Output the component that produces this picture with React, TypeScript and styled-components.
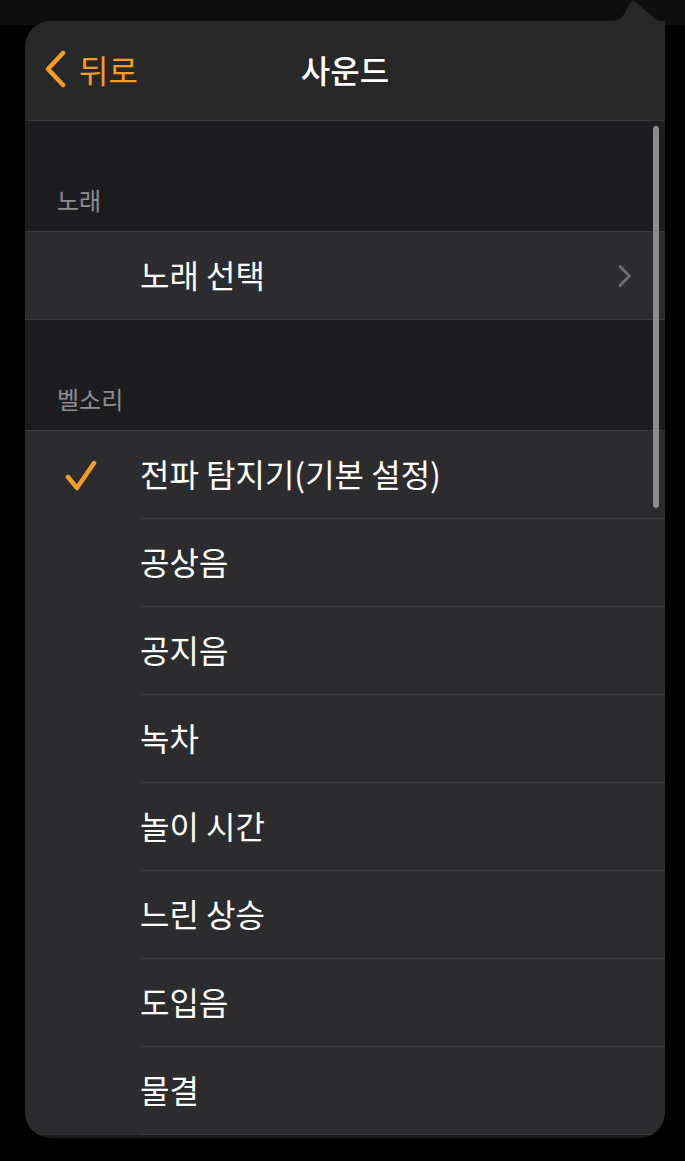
import React from "react";
import styled, { createGlobalStyle } from "styled-components";

const Global = createGlobalStyle`
  html, body { margin: 0; padding: 0; }
  body {
    background: linear-gradient(to bottom, #0e0e0e 0, #0e0e0e 25px, #000 25px, #000 100%);
    font-family: "Noto Sans CJK KR", "Noto Sans", sans-serif;
    height: 1161px;
    overflow: hidden;
  }
`;

const Page = styled.div`
  padding: 21px 20px 0 25px;
`;

const Panel = styled.div`
  position: relative;
  width: 640px;
  height: 1117px;
  background: #1c1c1e;
  border-radius: 26px 0 26px 26px;
`;

const Clip = styled.div`
  height: 100%;
  overflow: hidden;
  border-radius: 26px 0 26px 26px;
`;

const Pointer = styled.svg`
  position: absolute;
  right: 0;
  top: -21px;
  width: 53px;
  height: 50px;
`;

const NavBar = styled.div`
  height: 100px;
  box-sizing: border-box;
  padding-bottom: 3px;
  background: #272728;
  border-bottom: 1px solid #38383a;
  display: grid;
  grid-template-columns: 1fr auto 1fr;
  align-items: center;
`;

const Back = styled.div`
  display: flex;
  align-items: center;
  gap: 13px;
  padding-left: 19px;
  color: #f29d25;
  font-size: 32px;
  line-height: 1;
`;

const Title = styled.div`
  color: #ffffff;
  font-size: 32px;
  font-weight: 500;
  line-height: 1;
`;

const SectionLabel = styled.div`
  height: 110px;
  box-sizing: border-box;
  display: flex;
  align-items: flex-end;
  padding: 0 0 15px 32px;
  color: #8e8e92;
  font-size: 24px;
  line-height: 33px;
`;

const Group = styled.div`
  background: #2c2c2e;
  border-top: 1px solid #3a3a3c;
`;

const Row = styled.div<{ $inset?: boolean }>`
  display: grid;
  grid-template-columns: 115px 1fr;
  height: 88px;
  box-sizing: border-box;
  border-bottom: ${(p) => (p.$inset ? "none" : "1px solid #3a3a3c")};
`;

const Mark = styled.div`
  display: flex;
  align-items: center;
  padding-left: 40px;
`;

const Cell = styled.div<{ $inset?: boolean }>`
  display: flex;
  align-items: center;
  justify-content: space-between;
  padding: 0 33px 4px 0;
  color: #ffffff;
  font-size: 32px;
  line-height: 1;
  border-bottom: ${(p) => (p.$inset ? "1px solid #3a3a3c" : "none")};
`;

const Chevron = styled.svg`
  margin-top: 4px;
`;

const Scrollbar = styled.div`
  position: absolute;
  left: 628px;
  top: 105px;
  width: 6px;
  height: 382px;
  border-radius: 3px;
  background: #8c8c8f;
`;

const sounds = [
  "전파 탐지기(기본 설정)",
  "공상음",
  "공지음",
  "녹차",
  "놀이 시간",
  "느린 상승",
  "도입음",
  "물결",
];

export default function App() {
  return (
    <>
      <Global />
      <Page>
        <Panel>
          <Pointer viewBox="0 0 53 50">
            <path
              d="M0 21 C7 21 11 17 14 11 L18 3 Q21 -1 24.5 3 L53 27 L53 50 L0 50 Z"
              fill="#272728"
            />
          </Pointer>
          <Clip>
            <NavBar>
              <Back>
                <svg width="22" height="38" viewBox="0 0 22 38">
                  <path
                    d="M19 3 L4 19 L19 35"
                    fill="none"
                    stroke="#f29d25"
                    strokeWidth="4.5"
                    strokeLinecap="round"
                    strokeLinejoin="round"
                  />
                </svg>
                <span>뒤로</span>
              </Back>
              <Title>사운드</Title>
              <div />
            </NavBar>
            <SectionLabel>노래</SectionLabel>
            <Group>
              <Row>
                <Mark />
                <Cell>
                  <span>노래 선택</span>
                  <Chevron width="15" height="24" viewBox="0 0 15 24">
                    <path
                      d="M3 2.5 L12.5 12 L3 21.5"
                      fill="none"
                      stroke="#6c6c70"
                      strokeWidth="3"
                      strokeLinecap="round"
                      strokeLinejoin="round"
                    />
                  </Chevron>
                </Cell>
              </Row>
            </Group>
            <SectionLabel>벨소리</SectionLabel>
            <Group>
              {sounds.map((s, i) => (
                <Row key={s} $inset>
                  <Mark>
                    {i === 0 && (
                      <svg width="32" height="31" viewBox="0 0 32 31">
                        <path
                          d="M3 17 L12 28 L29 3"
                          fill="none"
                          stroke="#f29d25"
                          strokeWidth="4.5"
                          strokeLinecap="round"
                          strokeLinejoin="round"
                        />
                      </svg>
                    )}
                  </Mark>
                  <Cell $inset>
                    <span>{s}</span>
                  </Cell>
                </Row>
              ))}
            </Group>
          </Clip>
          <Scrollbar />
        </Panel>
      </Page>
    </>
  );
}
